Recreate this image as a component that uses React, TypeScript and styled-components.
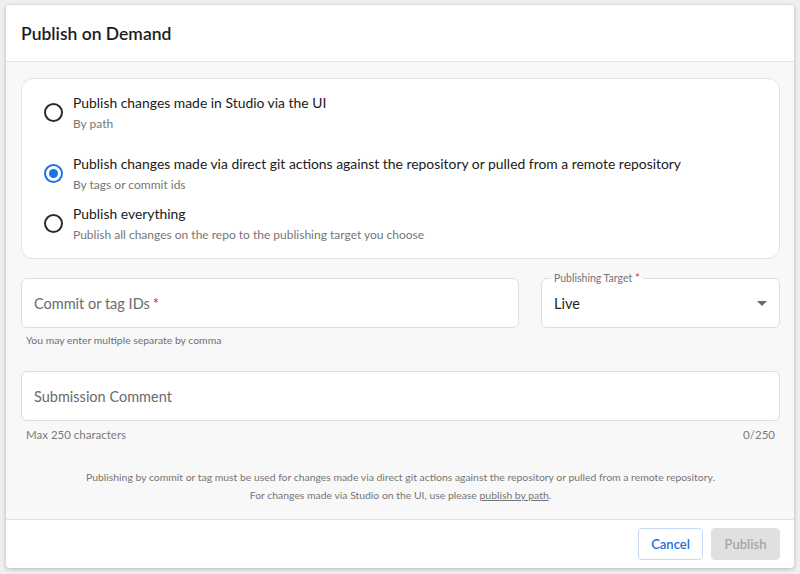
import React from "react";
import styled, { createGlobalStyle } from "styled-components";

const Global = createGlobalStyle`
  html, body { margin: 0; padding: 0; background: #efefef; }
  body { font-family: Lato, "Noto Sans", sans-serif; color: #1f1f1f; }
  * { box-sizing: border-box; }
`;

const Page = styled.div`
  width: 800px;
  height: 574px;
  padding: 5px 6px 6px 6px;
  background: #efefef;
`;

const Dialog = styled.div`
  width: 788px;
  height: 563px;
  background: #fff;
  border-radius: 4px;
  box-shadow: 0 1px 4px rgba(0,0,0,0.25);
  display: flex;
  flex-direction: column;
  overflow: hidden;
`;

const Header = styled.div`
  height: 57px;
  flex: none;
  display: flex;
  align-items: center;
  padding: 0 15px;
  border-bottom: 1px solid #e2e2e2;
`;

const Title = styled.h2`
  margin: 0;
  font-size: 17.5px;
  font-weight: 600;
  color: #1c1c1c;
`;

const Body = styled.div`
  flex: 1;
  background: #f8f8f8;
  padding: 16px 14px 0 15px;
  display: flex;
  flex-direction: column;
`;

const Card = styled.div`
  background: #fff;
  border: 1px solid #e3e3e3;
  border-radius: 12px;
  padding: 13px 0 14px 0;
  display: flex;
  flex-direction: column;
`;

const Option = styled.label<{ $gap?: number }>`
  display: flex;
  align-items: center;
  gap: 10px;
  padding: 0 16px 0 22px;
  margin-top: ${(p) => p.$gap ?? 0}px;
`;

const Radio = styled.span<{ $checked?: boolean }>`
  width: 19px;
  height: 19px;
  border-radius: 50%;
  border: 2px solid ${(p) => (p.$checked ? "#1a73e8" : "#2b2b2b")};
  display: flex;
  align-items: center;
  justify-content: center;
  flex: none;
  &::after {
    content: "";
    width: 9px;
    height: 9px;
    border-radius: 50%;
    background: #1a73e8;
    display: ${(p) => (p.$checked ? "block" : "none")};
  }
`;

const OptionText = styled.div`
  display: flex;
  flex-direction: column;
`;

const Primary = styled.span`
  font-size: 13.9px;
  line-height: 22px;
  color: #202020;
`;

const Secondary = styled.span`
  font-size: 12px;
  line-height: 19px;
  color: #767676;
`;

const FieldRow = styled.div`
  display: flex;
  gap: 22px;
  margin-top: 19px;
`;

const FieldCol = styled.div<{ $w: number }>`
  width: ${(p) => p.$w}px;
  flex: none;
  display: flex;
  flex-direction: column;
`;

const Box = styled.div`
  position: relative;
  height: 50px;
  background: #fff;
  border: 1px solid #dedede;
  border-radius: 6px;
  display: flex;
  align-items: center;
  padding: 0 12px;
`;

const Placeholder = styled.span`
  font-size: 14.5px;
  color: #6b6b6b;
`;

const Req = styled.span`
  color: #d32f2f;
  margin-left: 3px;
`;

const Value = styled.span`
  flex: 1;
  font-size: 14.5px;
  color: #1f1f1f;
`;

const FloatLabel = styled.span`
  position: absolute;
  left: 9px;
  top: -8px;
  padding: 0 3px;
  background: linear-gradient(#f8f8f8 50%, #fff 50%);
  font-size: 10.5px;
  line-height: 14px;
  color: #737373;
`;

const Helper = styled.div`
  display: flex;
  justify-content: space-between;
  padding: 0 5px;
  margin-top: 5px;
  font-size: 10.4px;
  line-height: 14px;
  color: #6f6f6f;
`;

const HelperLg = styled(Helper)`
  font-size: 11.5px;
  margin-top: 7px;
  color: #7a7a7a;
`;

const CommentWrap = styled.div`
  margin-top: 24px;
`;

const Notice = styled.div`
  margin-top: 26px;
  text-align: center;
  font-size: 10.4px;
  line-height: 18px;
  color: #757575;
`;

const Link = styled.a`
  color: #757575;
  text-decoration: underline;
`;

const Footer = styled.div`
  height: 49px;
  flex: none;
  border-top: 1px solid #e2e2e2;
  display: flex;
  align-items: center;
  justify-content: flex-end;
  gap: 8px;
  padding: 0 14px 0 0;
`;

const Button = styled.button<{ $variant: "outline" | "disabled" }>`
  height: 32px;
  width: ${(p) => (p.$variant === "outline" ? 65 : 69)}px;
  padding: 0;
  border-radius: 4px;
  font-family: inherit;
  font-size: 13px;
  font-weight: 600;
  border: 1px solid ${(p) => (p.$variant === "outline" ? "#c8d8f4" : "#e0e0e0")};
  background: ${(p) => (p.$variant === "outline" ? "#fff" : "#e0e0e0")};
  color: ${(p) => (p.$variant === "outline" ? "#1a6fe0" : "#a6a6a6")};
`;

const Arrow = () => (
  <svg width="10" height="5" viewBox="0 0 10 5">
    <path d="M0 0 L10 0 L5 5 Z" fill="#6a6a6a" />
  </svg>
);

export default function App() {
  return (
    <Page>
      <Global />
      <Dialog>
        <Header>
          <Title>Publish on Demand</Title>
        </Header>
        <Body>
          <Card>
            <Option>
              <Radio />
              <OptionText>
                <Primary>Publish changes made in Studio via the UI</Primary>
                <Secondary>By path</Secondary>
              </OptionText>
            </Option>
            <Option $gap={20}>
              <Radio $checked />
              <OptionText>
                <Primary>
                  Publish changes made via direct git actions against the repository or pulled from a remote repository
                </Primary>
                <Secondary>By tags or commit ids</Secondary>
              </OptionText>
            </Option>
            <Option $gap={9}>
              <Radio />
              <OptionText>
                <Primary>Publish everything</Primary>
                <Secondary>Publish all changes on the repo to the publishing target you choose</Secondary>
              </OptionText>
            </Option>
          </Card>
          <FieldRow>
            <FieldCol $w={498}>
              <Box>
                <Placeholder>
                  Commit or tag IDs<Req>*</Req>
                </Placeholder>
              </Box>
              <Helper>
                <span>You may enter multiple separate by comma</span>
              </Helper>
            </FieldCol>
            <FieldCol $w={239}>
              <Box>
                <FloatLabel>
                  Publishing Target<Req>*</Req>
                </FloatLabel>
                <Value>Live</Value>
                <Arrow />
              </Box>
            </FieldCol>
          </FieldRow>
          <CommentWrap>
            <Box>
              <Placeholder>Submission Comment</Placeholder>
            </Box>
            <HelperLg>
              <span>Max 250 characters</span>
              <span>0/250</span>
            </HelperLg>
          </CommentWrap>
          <Notice>
            Publishing by commit or tag must be used for changes made via direct git actions against the repository or pulled from a remote repository.
            <br />
            For changes made via Studio on the UI, use please <Link>publish by path</Link>.
          </Notice>
        </Body>
        <Footer>
          <Button $variant="outline">Cancel</Button>
          <Button $variant="disabled">Publish</Button>
        </Footer>
      </Dialog>
    </Page>
  );
}
